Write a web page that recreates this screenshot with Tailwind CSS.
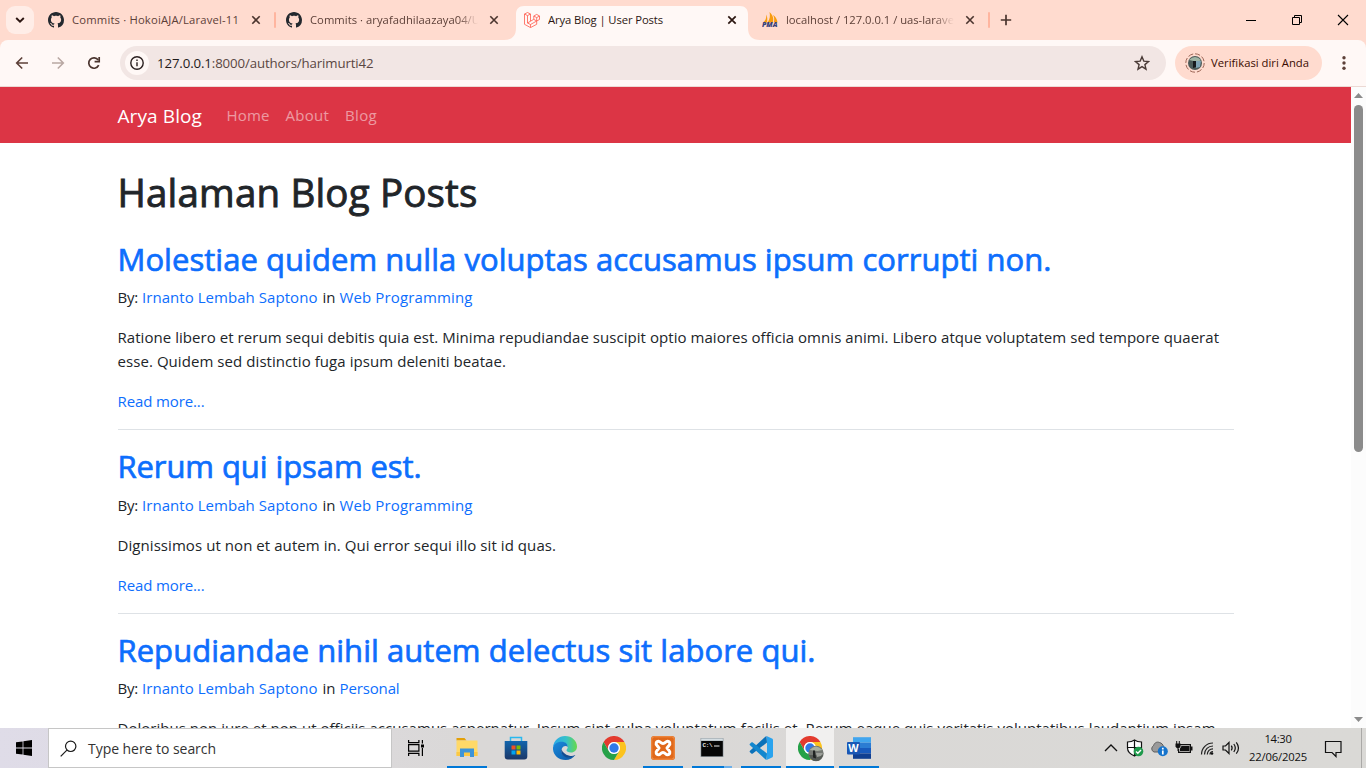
<!DOCTYPE html>
<html lang="id">
<head>
<meta charset="utf-8">
<title>Arya Blog | User Posts</title>
<script src="https://cdn.jsdelivr.net/npm/@tailwindcss/browser@4"></script>
</head>
<body class="w-[1366px] h-[768px] overflow-hidden flex flex-col bg-white font-['Open_Sans','Noto_Sans',sans-serif]">

<!-- Tab strip -->
<header class="h-10 shrink-0 bg-[#ffdbcf] flex items-center text-[11.25px] text-[#5d4038] whitespace-nowrap">
  <button class="ml-1.5 mr-1 size-7 rounded-[9px] bg-[#ffede7] flex items-center justify-center">
    <svg class="size-2.5" viewBox="0 0 10 10" fill="none" stroke="#2b1611" stroke-width="1.9"><path d="M1.2 3 5 6.700 8.800 3"/></svg>
  </button>
  <div class="w-[238px] pl-2.5 flex items-center">
    <svg class="size-4 shrink-0" viewBox="0 0 16 16" fill="#24292f"><path id="gh" d="M8 0C3.58 0 0 3.58 0 8c0 3.54 2.29 6.53 5.47 7.59.4.07.55-.17.55-.38 0-.19-.01-.82-.01-1.49-2.01.37-2.53-.49-2.69-.94-.09-.23-.48-.94-.82-1.13-.28-.15-.68-.52-.01-.53.63-.01 1.08.58 1.23.82.72 1.21 1.87.87 2.33.66.07-.52.28-.87.51-1.07-1.78-.2-3.64-.89-3.64-3.95 0-.87.31-1.59.82-2.15-.08-.2-.36-1.02.08-2.12 0 0 .67-.21 2.2.82.64-.18 1.32-.27 2-.27s1.36.09 2 .27c1.53-1.04 2.2-.82 2.2-.82.44 1.1.16 1.92.08 2.12.51.56.82 1.27.82 2.15 0 3.07-1.87 3.75-3.65 3.95.29.25.54.73.54 1.48 0 1.07-.01 1.93-.01 2.2 0 .21.15.46.55.38A8.01 8.01 0 0 0 16 8c0-4.42-3.58-8-8-8z"/></svg>
    <div class="ml-2 w-[168px] overflow-hidden tracking-[0.176px]">Commits · HokoiAJA/Laravel-11</div>
    <svg class="ml-2.5 size-3" viewBox="0 0 12 12" stroke="#4a342e" stroke-width="1.6"><path d="m2.3 2.3 7.4 7.4m0-7.4-7.4 7.4"/></svg>
    <span class="ml-3 w-0.5 h-4 rounded bg-[#ffb59f]"></span>
  </div>
  <div class="w-[238px] pl-2.5 flex items-center">
    <svg class="size-4 shrink-0" viewBox="0 0 16 16" fill="#24292f"><use href="#gh"/></svg>
    <div class="ml-2 w-[168px] overflow-hidden mask-r-from-88% mask-r-to-100% tracking-[0.032px]">Commits · aryafadhilaazaya04/U</div>
    <svg class="ml-2.5 size-3" viewBox="0 0 12 12" stroke="#4a342e" stroke-width="1.6"><path d="m2.3 2.3 7.4 7.4m0-7.4-7.4 7.4"/></svg>
  </div>
  <div class="relative h-10 w-[238px] pl-2.5 flex items-center text-[#2b1611]">
    <svg class="absolute left-[-10px] top-0 w-[256px] h-10" viewBox="0 0 256 40" fill="#fff8f6"><path d="M0 40c8 0 12-4 12-12V14c0-5 3-8 8-8h216c5 0 8 3 8 8v14c0 8 4 12 12 12z"/></svg>
    <svg class="relative size-4 shrink-0" viewBox="0 0 16 16" fill="none" stroke="#ff5a4d" stroke-width=".8" stroke-linejoin="round"><path d="M.5 2 3.5.5 6.5 2v7.2L9.800 7.300V4l2.900-1.600L15.500 4v3.500L12.700 9v3.300l-6.200 3.300-6-3.300zm0 0 3 1.600 3-1.600m-3 1.600V11l3 1.500L12.700 9 9.800 7.400M9.800 4l2.900 1.600L15.500 4m-2.800 1.600V9M3.500 11l3-1.800m0 3.300v3"/></svg>
    <div class="relative ml-2 w-[168px] overflow-hidden tracking-[-0.1px]">Arya Blog | User Posts</div>
    <svg class="relative ml-2.5 size-3" viewBox="0 0 12 12" stroke="#2b1611" stroke-width="1.7"><path d="m2.3 2.3 7.4 7.4m0-7.4-7.4 7.4"/></svg>
  </div>
  <div class="w-[238px] pl-2.5 flex items-center">
    <svg class="size-4 shrink-0" viewBox="0 0 16 16"><path fill="#f89c0e" d="M1 10.500C3.500 9 4.500 6 4.300 2.500 5.500 5 5.500 8 5 10.500zM5.500 10.500C8 7 8.300 4 7.500 0c3.500 3 4.500 7 3.300 10.500zM11.800 10.500c.8-3 .5-5-.8-7.500 2.500 1.500 4 4 4.500 7.500z"/><text x="0" y="15.300" font-family="Open Sans" font-size="6" font-weight="800" font-style="italic" fill="#36407a" textLength="15.500" lengthAdjust="spacingAndGlyphs">PMA</text></svg>
    <div class="ml-2 w-[168px] overflow-hidden mask-r-from-88% mask-r-to-100% tracking-[-0.016px]">localhost / 127.0.0.1 / uas-larave</div>
    <svg class="ml-2.5 size-3" viewBox="0 0 12 12" stroke="#4a342e" stroke-width="1.6"><path d="m2.3 2.3 7.4 7.4m0-7.4-7.4 7.4"/></svg>
    <span class="ml-3 w-0.5 h-4 rounded bg-[#ffb59f]"></span>
  </div>
  <svg class="ml-2.5 size-3" viewBox="0 0 12 12" stroke="#4a342e" stroke-width="1.7"><path d="M6 .8v10.400M.8 6h10.400"/></svg>
  <div class="ml-auto flex items-center">
    <svg class="w-[46px] h-10" viewBox="0 0 46 40" stroke="#000"><path d="M18 20.500h10"/></svg>
    <svg class="w-[46px] h-10" viewBox="0 0 46 40" stroke="#000" fill="none"><path d="M18.500 17.500h7v7h-7zM20.500 17v-1.500h7v7H26"/></svg>
    <svg class="w-[46px] h-10" viewBox="0 0 46 40" stroke="#000" stroke-width="1.1"><path d="m18 15 10 10m0-10L18 25"/></svg>
  </div>
</header>

<!-- Toolbar -->
<div class="h-[47px] shrink-0 bg-[#ffdbcf]">
  <div class="h-full rounded-t-lg bg-[#fff8f6] border-b border-[#ecd9d4] flex items-center whitespace-nowrap">
    <svg class="ml-3.5 size-4" viewBox="0 0 16 16" fill="none" stroke="#5d4038" stroke-width="1.6"><path d="M14 8H3m5.200-5.500L2.700 8l5.500 5.500"/></svg>
    <svg class="ml-5 size-4" viewBox="0 0 16 16" fill="none" stroke="#b9a8a3" stroke-width="1.6"><path d="M2 8h11M7.800 2.500 13.300 8l-5.500 5.500"/></svg>
    <svg class="ml-5 size-4" viewBox="0 0 16 16" fill="none" stroke="#4a342e" stroke-width="1.7"><path d="M12.700 10.200A5.200 5.200 0 1 1 12.200 5"/><path d="M13.200 2v4.600H8.600"/></svg>
    <div class="ml-[18px] w-[1046px] h-[34px] rounded-full bg-[#f2e6e4] flex items-center pl-[5px] pr-4">
      <span class="size-6 rounded-full bg-[#fff8f6] flex items-center justify-center">
        <svg class="size-3.5" viewBox="0 0 14 14" fill="none" stroke="#2b2020" stroke-width="1.4"><circle cx="7" cy="7" r="6.200"/><path d="M7 6.200v4M7 3.500V5"/></svg>
      </span>
      <span class="ml-2 pt-px text-[13.25px] text-[#5a4642] tracking-[-0.125px]"><span class="text-[#1f1a1a]">127.0.0.1</span>:8000/authors/harimurti42</span>
      <svg class="ml-auto size-4" viewBox="0 0 16 16" fill="none" stroke="#4a3a36" stroke-width="1.400"><path d="m8 1.800 1.800 4.300 4.700.4-3.600 3.100 1.100 4.600L8 11.700l-4 2.500 1.100-4.600L1.500 6.500l4.700-.4z"/></svg>
    </div>
    <div class="ml-[9px] w-[147px] h-[34px] rounded-full bg-[#ffdbcf] flex items-center pl-2.5 text-[#3a0b01]">
      <svg class="size-5" viewBox="0 0 20 20"><circle cx="10" cy="10" r="9.200" fill="none" stroke="#9c6555" stroke-dasharray="5.200 2"/><circle cx="10" cy="10" r="7" fill="#4c5a58"/><path d="M4 7q6-6 12 0l-3 2z" fill="#9fb5a5"/><path d="M10 8h6l-1 6-4 1z" fill="#7ea3b4"/><path d="M8 8h3v6l-3 1z" fill="#17191c"/></svg>
      <span class="ml-1.5 text-[11.25px] tracking-[0.02px]">Verifikasi diri Anda</span>
    </div>
    <svg class="ml-[14px] size-4" viewBox="0 0 16 16" fill="#5d4038"><circle cx="8" cy="2.700" r="1.700"/><circle cx="8" cy="8" r="1.700"/><circle cx="8" cy="13.300" r="1.700"/></svg>
  </div>
</div>

<!-- Page -->
<div class="h-[641px] shrink-0 flex overflow-hidden">
  <div class="w-[1351px] h-full overflow-hidden text-[#212529] text-[15px] leading-6">
    <nav class="h-14 bg-[#dc3545]">
      <div class="mx-auto w-[1116px] h-full flex items-center whitespace-nowrap text-white/50">
        <a class="text-white text-[19px] pt-0.5 tracking-[0.099px]">Arya Blog</a>
        <a class="ml-[24.5px] tracking-[0.148px]">Home</a>
        <a class="ml-4 tracking-[0.253px]">About</a>
        <a class="ml-4 tracking-[0.336px]">Blog</a>
      </div>
    </nav>
    <main class="mx-auto w-[1116px] pt-6 whitespace-nowrap">
      <h1 class="mb-[23px] pt-px text-[38.5px] leading-[48px] tracking-[0.17px] [-webkit-text-stroke:0.9px]">Halaman Blog Posts</h1>
      <article class="mb-4 pb-4 border-b border-[#dee2e6]">
        <h2 class="mb-[7px] pt-px text-[31px] leading-[38.4px] text-[#0d6efd] tracking-[0.043px] [-webkit-text-stroke:0.7px]">Molestiae quidem nulla voluptas accusamus ipsum corrupti non.</h2>
        <p class="mb-4"><span class="tracking-[-0.219px]">By:</span><a class="ml-1 text-[#0d6efd] tracking-[0.05px]">Irnanto Lembah Saptono</a><span class="ml-[5px]">in</span><a class="ml-1 text-[#0d6efd] tracking-[0.13px]">Web Programming</a></p>
        <p class="mb-4"><span class="tracking-[0.05px]">Ratione libero et rerum sequi debitis quia est. Minima repudiandae suscipit optio maiores officia omnis animi. Libero atque voluptatem sed tempore quaerat</span><br><span class="tracking-[0.066px]">esse. Quidem sed distinctio fuga ipsum deleniti beatae.</span></p>
        <a class="block text-[#0d6efd] tracking-[-0.115px]">Read more...</a>
      </article>
      <article class="mb-4 pb-4 border-b border-[#dee2e6]">
        <h2 class="mb-[7px] pt-px text-[31px] leading-[38.4px] text-[#0d6efd] tracking-[-0.087px] [-webkit-text-stroke:0.7px]">Rerum qui ipsam est.</h2>
        <p class="mb-4"><span class="tracking-[-0.219px]">By:</span><a class="ml-1 text-[#0d6efd] tracking-[0.05px]">Irnanto Lembah Saptono</a><span class="ml-[5px]">in</span><a class="ml-1 text-[#0d6efd] tracking-[0.13px]">Web Programming</a></p>
        <p class="mb-4 tracking-[0.066px]">Dignissimos ut non et autem in. Qui error sequi illo sit id quas.</p>
        <a class="block text-[#0d6efd] tracking-[-0.115px]">Read more...</a>
      </article>
      <article>
        <h2 class="mb-[7px] pt-px text-[31px] leading-[38.4px] text-[#0d6efd] tracking-[0.042px] [-webkit-text-stroke:0.7px]">Repudiandae nihil autem delectus sit labore qui.</h2>
        <p class="mb-4"><span class="tracking-[-0.219px]">By:</span><a class="ml-1 text-[#0d6efd] tracking-[0.05px]">Irnanto Lembah Saptono</a><span class="ml-[5px]">in</span><a class="ml-1 text-[#0d6efd] tracking-[-0.135px]">Personal</a></p>
        <p class="tracking-[0.026px]">Doloribus non iure et non ut officiis accusamus aspernatur. Ipsum sint culpa voluptatum facilis et. Rerum eaque quis veritatis voluptatibus laudantium ipsam</p>
      </article>
    </main>
  </div>
  <div class="w-[15px] h-full bg-[#fcfcfc] flex flex-col items-center justify-between py-1.5">
    <svg class="w-[9px] h-[5px]" viewBox="0 0 9 5" fill="#8b8b8b"><path d="M4.500 0 9 5H0z"/></svg>
    <div class="mt-[7px] mb-auto w-[9px] h-[347px] rounded-full bg-[#8b8b8b]"></div>
    <svg class="w-[9px] h-[5px]" viewBox="0 0 9 5" fill="#8b8b8b"><path d="M4.500 5 9 0H0z"/></svg>
  </div>
</div>

<!-- Taskbar -->
<footer class="h-10 shrink-0 flex bg-linear-to-r from-[#dfdce8] via-[#dad8d7] via-35% to-[#dad9d6] whitespace-nowrap">
  <div class="w-12 flex items-center justify-center">
    <svg class="size-4" viewBox="0 0 16 16"><path d="M0 2.300 6.600 1.400v6.200H0zM7.400 1.300 16 0v7.600H7.400zM0 8.400h6.600v6.200L0 13.700zM7.400 8.400H16V16l-8.600-1.300z"/></svg>
  </div>
  <div class="w-[344px] border border-[#c6c6c6] bg-white flex items-center pl-[11px]">
    <svg class="size-[17px]" viewBox="0 0 17 17" fill="none" stroke="#1a1a1a" stroke-width="1.200"><circle cx="10.700" cy="6.300" r="5.200"/><path d="M6.900 10.100.7 16.300"/></svg>
    <span class="ml-[11px] text-[14px] text-[#333] tracking-[-0.044px]">Type here to search</span>
  </div>
  <div class="w-12 flex items-center justify-center">
    <svg class="size-4" viewBox="0 0 16 16" fill="none" stroke="#000" stroke-width="1.200"><path d="M.6 0v2.600h10.300V0M.6 16v-2.600h10.300V16M.6 4.600h10.300v6.600H.6zM14.400 0v3.500M14.400 8v8"/><path d="M13 4.500h3v3h-3z" fill="#000" stroke="none"/></svg>
  </div>
  <div class="ml-0.5 w-[49px] pt-1 flex flex-col items-center justify-between">
    <svg class="mt-1 size-6" viewBox="0 0 24 24"><path fill="#e3a008" d="M1.500 2h8l2 2.500h-10z"/><path fill="#ffd968" d="M1.500 4.500h21V20h-21z"/><path fill="#fbc844" d="M1.500 16h21v4h-21z"/><path fill="#3d94d8" d="M5 12.500h14V21h-4v-4.500H9V21H5z"/></svg>
    <span class="w-10 h-0.5 bg-[#0078d7]"></span>
  </div>
  <div class="w-[49px] flex items-center justify-center">
    <svg class="size-6" viewBox="0 0 24 24"><defs><linearGradient id="st" x2="0" y2="1"><stop stop-color="#1265ad"/><stop offset="1" stop-color="#1b3768"/></linearGradient></defs><path fill="none" stroke="#29b8ef" stroke-width="1.500" d="M6.500 6V1.500h11V6"/><path fill="url(#st)" d="M.7 5h22.600v15.500a3 3 0 0 1-3 3H3.700a3 3 0 0 1-3-3z"/><path fill="#f25022" d="M7.500 9.500h4v4h-4z"/><path fill="#7fba00" d="M12.500 9.500h4v4h-4z"/><path fill="#00a4ef" d="M7.500 14.500h4v4h-4z"/><path fill="#ffb900" d="M12.500 14.500h4v4h-4z"/></svg>
  </div>
  <div class="w-[49px] flex items-center justify-center">
    <svg class="size-6" viewBox="0 0 24 24"><defs><linearGradient id="e1"><stop stop-color="#2aa7e8"/><stop offset=".55" stop-color="#35c1c9"/><stop offset="1" stop-color="#67d949"/></linearGradient><linearGradient id="e2" x2="1" y2="1"><stop stop-color="#1b8bdc"/><stop offset="1" stop-color="#0b57a6"/></linearGradient></defs><path fill="url(#e1)" d="M0 11C1 4 6 0 12 0c7 0 12 5 12 10.500 0 3.500-2.500 6-6 6-3 0-4.500-1-4.500-2.200 0-.8 1.200-1.300 1.200-3.300C14.700 8 12 6.500 9 6.500 5 6.500 1.500 8.500 0 11z"/><path fill="url(#e2)" d="M0 11.500C1.200 7.500 5 5.800 8.800 5.800c3.600 0 6 2.400 5.900 5.200C13 9.300 9.500 10 8.500 13.500c-1 4.500 3.500 8.500 9 7.500 2-.4 3.500-1.200 4.800-2C20.300 22 16.500 24 12.500 24 5 24-.5 18.500 0 11.500z"/><path fill="#134d92" d="M8.500 13c-1.500 6 4 9.800 9.500 8.300 1.700-.5 3.200-1.300 4.400-2.400-2 1.100-4 1.300-6 .8-4.500-1-7.200-3.700-7.900-6.700z"/></svg>
  </div>
  <div class="w-[49px] flex items-center justify-center">
    <svg class="size-6" viewBox="0 0 24 24"><g id="cr"><path fill="#e33b2e" d="M1.600 6A12 12 0 0 1 22.400 6H12a6 6 0 0 0-5.200 9z"/><path fill="#fcc31e" d="M22.400 6A12 12 0 0 1 12 24l5.200-9A6 6 0 0 0 12 6z"/><path fill="#26a148" d="M12 24A12 12 0 0 1 1.600 6l5.200 9a6 6 0 0 0 10.400 0z"/><circle cx="12" cy="12" r="6" fill="#fff"/><circle cx="12" cy="12" r="4.700" fill="#3079e8"/></g></svg>
  </div>
  <div class="w-[49px] pt-1 flex flex-col items-center justify-between">
    <svg class="mt-1 size-6" viewBox="0 0 24 24"><rect width="24" height="24" rx="3" fill="#e0681a"/><rect x=".8" y=".8" width="22.400" height="22.400" rx="2.500" fill="none" stroke="#f79a55" stroke-width=".8"/><path fill="none" stroke="#fff" stroke-width="3" stroke-linejoin="round" d="M7.500 5.200C5 5.200 4.500 8 6 9.500L8 12l-2 2.500c-1.500 1.500-1 4.300 1.500 4.300 2 0 2-2.300 4.500-2.300s2.500 2.300 4.500 2.300c2.500 0 3-2.800 1.500-4.300L16 12l2-2.500c1.500-1.500 1-4.300-1.500-4.300-2 0-2 2.300-4.500 2.300S9.500 5.200 7.500 5.200z"/></svg>
    <span class="w-10 h-0.5 bg-[#0078d7]"></span>
  </div>
  <div class="w-[49px] pt-1 flex flex-col items-center justify-between">
    <svg class="mt-1 size-6" viewBox="0 0 24 24"><path fill="#9aa3a8" d="M.5 2h23v19H.5z"/><path fill="#d4dde2" d="M1.200 2.600h21.600v2H1.200z"/><path fill="#060606" d="M1.200 5h21.600v15.300H1.200z"/><text x="2.500" y="10.500" font-family="Liberation Mono" font-size="6" font-weight="700" fill="#e8e8e8" textLength="10">C:\</text><path stroke="#eee" d="M14 10h5.500"/></svg>
    <span class="w-10 h-0.5 bg-[#0078d7] flex justify-end"><span class="w-2 h-0.5 bg-[#6cb0ea]"></span></span>
  </div>
  <div class="w-[49px] pt-1 flex flex-col items-center justify-between">
    <svg class="mt-1 size-6" viewBox="0 0 24 24"><path fill="#0b71b9" d="m17.500 0-1.200.7L1 14.800c-.5.500-.5 1.100 0 1.500l1.300 1.200c.5.400 1 .4 1.500.1L18 6.500z"/><path fill="#1387ce" d="m17.500 24-1.200-.7L1 9.200c-.5-.5-.5-1.100 0-1.500l1.300-1.200c.5-.4 1-.4 1.500-.1L18 17.500z"/><path fill="#29a3ee" d="m17.500 0 5.500 2.600c.6.300 1 .8 1 1.500v15.800c0 .7-.4 1.200-1 1.500L17.500 24c-.6.200-1 .1-1.500-.5.900.9 2 .3 2-.8V1.300c0-1.100-1.100-1.700-2-.8.500-.6.900-.7 1.500-.5z"/></svg>
    <span class="w-10 h-0.5 bg-[#0078d7]"></span>
  </div>
  <div class="w-[49px] flex justify-center">
    <div class="w-12 bg-[#f1f0ef] pt-1 flex flex-col items-center justify-between">
      <svg class="mt-1 ml-0.5 w-[26px] h-[26px]" viewBox="0 0 26 26"><use href="#cr"/><circle cx="18" cy="17.500" r="7.700" fill="#747873"/><path fill="#a9b1a2" d="M11.500 14q6.500-7 13 0l-5 1z"/><path fill="#555a55" d="M11 19h14q-1 4-5 6h-4q-4-2-5-6z"/><path fill="#9da09a" d="M18 17h7l-2 3-4 1z"/><path fill="#202322" d="M15 14.500h2l1 8-3-1z"/></svg>
      <span class="w-12 h-0.5 bg-[#0078d7]"></span>
    </div>
  </div>
  <div class="w-[49px] pt-1 flex flex-col items-center justify-between">
    <svg class="mt-1 size-6" viewBox="0 0 24 24"><path fill="#41a5ee" d="M6 1.200h18v5.500H6z"/><path fill="#2b7cd3" d="M6 6.700h18V12H6z"/><path fill="#185abd" d="M6 12h18v5.400H6z"/><path fill="#103f91" d="M6 17.400h18v5.400H6z"/><rect y="6" width="13" height="12.500" rx="1" fill="#1a57b5"/><text x="1.300" y="15.800" font-family="Open Sans" font-size="10" font-weight="700" fill="#fff" textLength="10.400" lengthAdjust="spacingAndGlyphs">W</text></svg>
    <span class="w-10 h-0.5 bg-[#0078d7]"></span>
  </div>
  <div class="ml-auto flex items-center">
    <svg class="w-6 h-6" viewBox="0 0 24 24" fill="none" stroke="#111" stroke-width="1.300"><path d="m6 15 6-6 6 6"/></svg>
    <svg class="w-6 h-6" viewBox="0 0 24 24"><path fill="#fff" stroke="#111" stroke-width="1.200" d="M11.500 4c2 1.500 4.500 2 7 2v6c0 4-3.500 6.500-7 8-3.500-1.500-7-4-7-8V6c2.500 0 5-.5 7-2z"/><path stroke="#111" stroke-width="1.200" d="M11.500 4v16M4.500 11.500h14"/><circle cx="15.500" cy="15.500" r="4.800" fill="#1f9a4c"/><path fill="none" stroke="#fff" stroke-width="1.400" d="m13 15.500 1.800 1.800 3.200-3.400"/></svg>
    <svg class="w-6 h-6" viewBox="0 0 24 24"><path fill="#9a9a9a" stroke="#5d5d5d" d="M7 16a3.500 3.500 0 0 1-.5-6.300C7.500 6.500 10 5.500 12.500 6.500c2 .5 3.500 2 4 4l2 5.500z"/><circle cx="15.800" cy="15.300" r="5" fill="#1473cc"/><path stroke="#fff" stroke-width="1.700" d="M15.800 14.500v4M15.800 11.800v1.600"/></svg>
    <svg class="w-6 h-6" viewBox="0 0 24 24"><path fill="none" stroke="#111" stroke-width="1.200" d="M9 8.600h10.400v7.800H7.600V13"/><path fill="#111" d="M10.500 10h8v5H9v-2.500zM19.700 10.500h1.800v4h-1.800zM4.500 7.500h5v3.200l-1.500 1.500H6L4.500 10.700z"/><path stroke="#111" d="M5.700 5v3M8.300 5v3M7 12v3"/></svg>
    <svg class="w-6 h-6" viewBox="0 0 24 24" fill="none" stroke="#222" stroke-width="1.200"><path d="M6.500 18.500C6.500 12 11.500 7 18 7M9.500 18.500c0-5 3.700-8.500 8.500-8.500M12.300 18.500c0-3.300 2.500-5.700 5.700-5.700"/><path d="M15 18.500c0-1.700 1.300-3 3-3"/><circle cx="17" cy="17.500" r="1.300" fill="#111" stroke="none"/></svg>
    <svg class="w-6 h-6" viewBox="0 0 24 24" fill="none" stroke="#111" stroke-width="1.200"><path d="M4 10h2.500L10 6.500v11L6.500 14H4zM12.300 9.700c1 1.400 1 3.200 0 4.600M14.800 8c1.800 2.400 1.800 5.600 0 8M17.300 6.300c2.600 3.400 2.600 8 0 11.400"/></svg>
    <div class="w-[70px] flex flex-col items-center text-[11.25px] leading-[18px] text-[#111]"><span class="tracking-[-0.338px]">14:30</span><span class="tracking-[-0.172px]">22/06/2025</span></div>
    <svg class="w-10 h-10" viewBox="0 0 40 40" fill="none" stroke="#111" stroke-width="1.200"><path d="M12.500 13.500h15.500v11h-5v4l-4-4h-6.500z"/></svg>
    <span class="ml-2 w-px h-10 bg-[#aaa9a7]"></span><span class="w-1"></span>
  </div>
</footer>
</body>
</html>
